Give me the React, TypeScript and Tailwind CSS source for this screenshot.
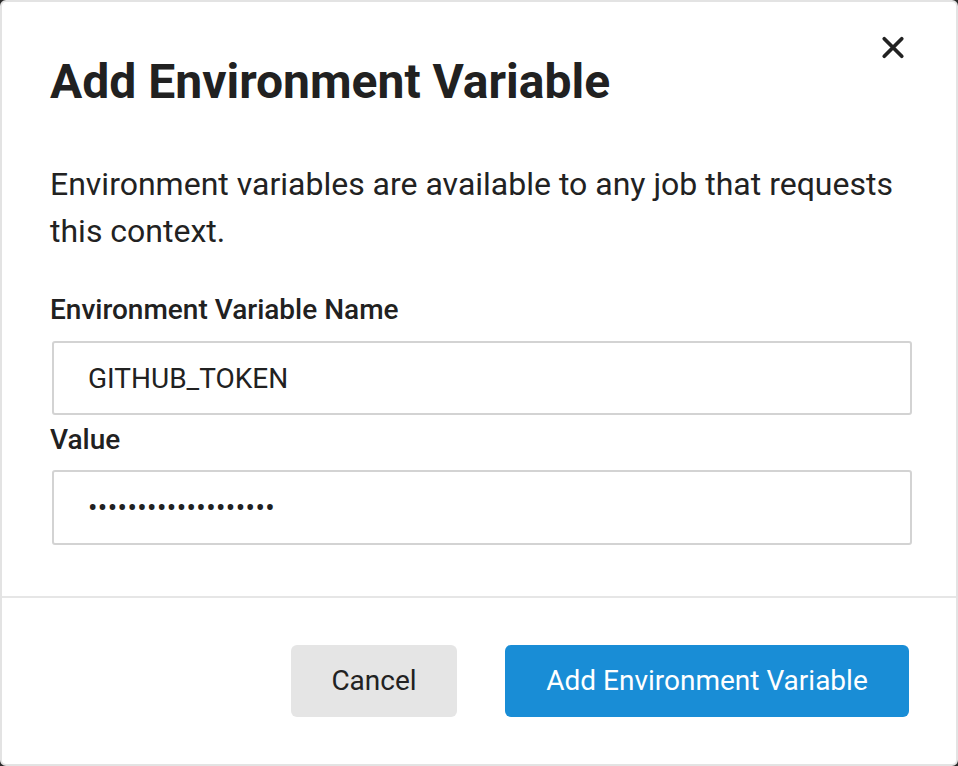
import { useState } from "react";

// Modal for adding a context environment variable
export default function App() {
  const [name, setName] = useState("GITHUB_TOKEN");
  const [value, setValue] = useState("abcdefghijklmnopqrs");

  return (
    <div className="w-[958px] h-[766px] bg-[#2a2a2a] font-['Roboto',sans-serif] text-[#212121]">
      <div className="w-full h-full bg-white rounded-[6px] border-2 border-[#e3e3e3] flex flex-col">
        {/* Header */}
        <div className="relative px-[48px] pt-[52px]">
          <h2 className="text-[48px] leading-[56px] font-bold">
            Add Environment Variable
          </h2>
          <button
            type="button"
            aria-label="Close"
            className="absolute right-[48px] top-[30px] w-[30px] h-[30px] flex items-center justify-center"
          >
            <svg viewBox="0 0 24 24" className="w-[31px] h-[31px]" fill="none" stroke="#222" strokeWidth="3" strokeLinecap="round">
              <path d="M5 5l14 14M19 5L5 19" />
            </svg>
          </button>
        </div>

        {/* Body */}
        <div className="px-[48px] pt-[51px]">
          <p className="text-[32px] leading-[47px] text-[#222]">
            Environment variables are available to any job that requests this context.
          </p>

          <label className="block mt-[38px] text-[28px] leading-[34px] font-medium">
            Environment Variable Name
          </label>
          <input
            value={name}
            onChange={(e) => setName(e.target.value)}
            className="mt-[14px] w-[860px] h-[74px] ml-[2px] px-[34px] text-[28px] border-2 border-[#d3d3d3] rounded-[3px] outline-none"
          />

          <label className="block mt-[8px] text-[28px] leading-[34px] font-medium">Value</label>
          <input
            type="password"
            value={value}
            onChange={(e) => setValue(e.target.value)}
            className="mt-[13px] w-[860px] h-[75px] ml-[2px] px-[34px] text-[28px] tracking-[0.4px] border-2 border-[#d3d3d3] rounded-[3px] outline-none"
          />
        </div>

        {/* Footer */}
        <div className="mt-[51px] border-t-2 border-[#e6e6e6] flex-1 flex items-start justify-end gap-[48px] pt-[47px] pr-[47px]">
          <button
            type="button"
            className="w-[166px] h-[72px] rounded-[6px] bg-[#e5e5e5] text-[28px] font-normal text-[#222]"
          >
            Cancel
          </button>
          <button
            type="button"
            className="w-[404px] h-[72px] rounded-[6px] bg-[#198dd6] text-[28px] font-normal text-white"
          >
            Add Environment Variable
          </button>
        </div>
      </div>
    </div>
  );
}
